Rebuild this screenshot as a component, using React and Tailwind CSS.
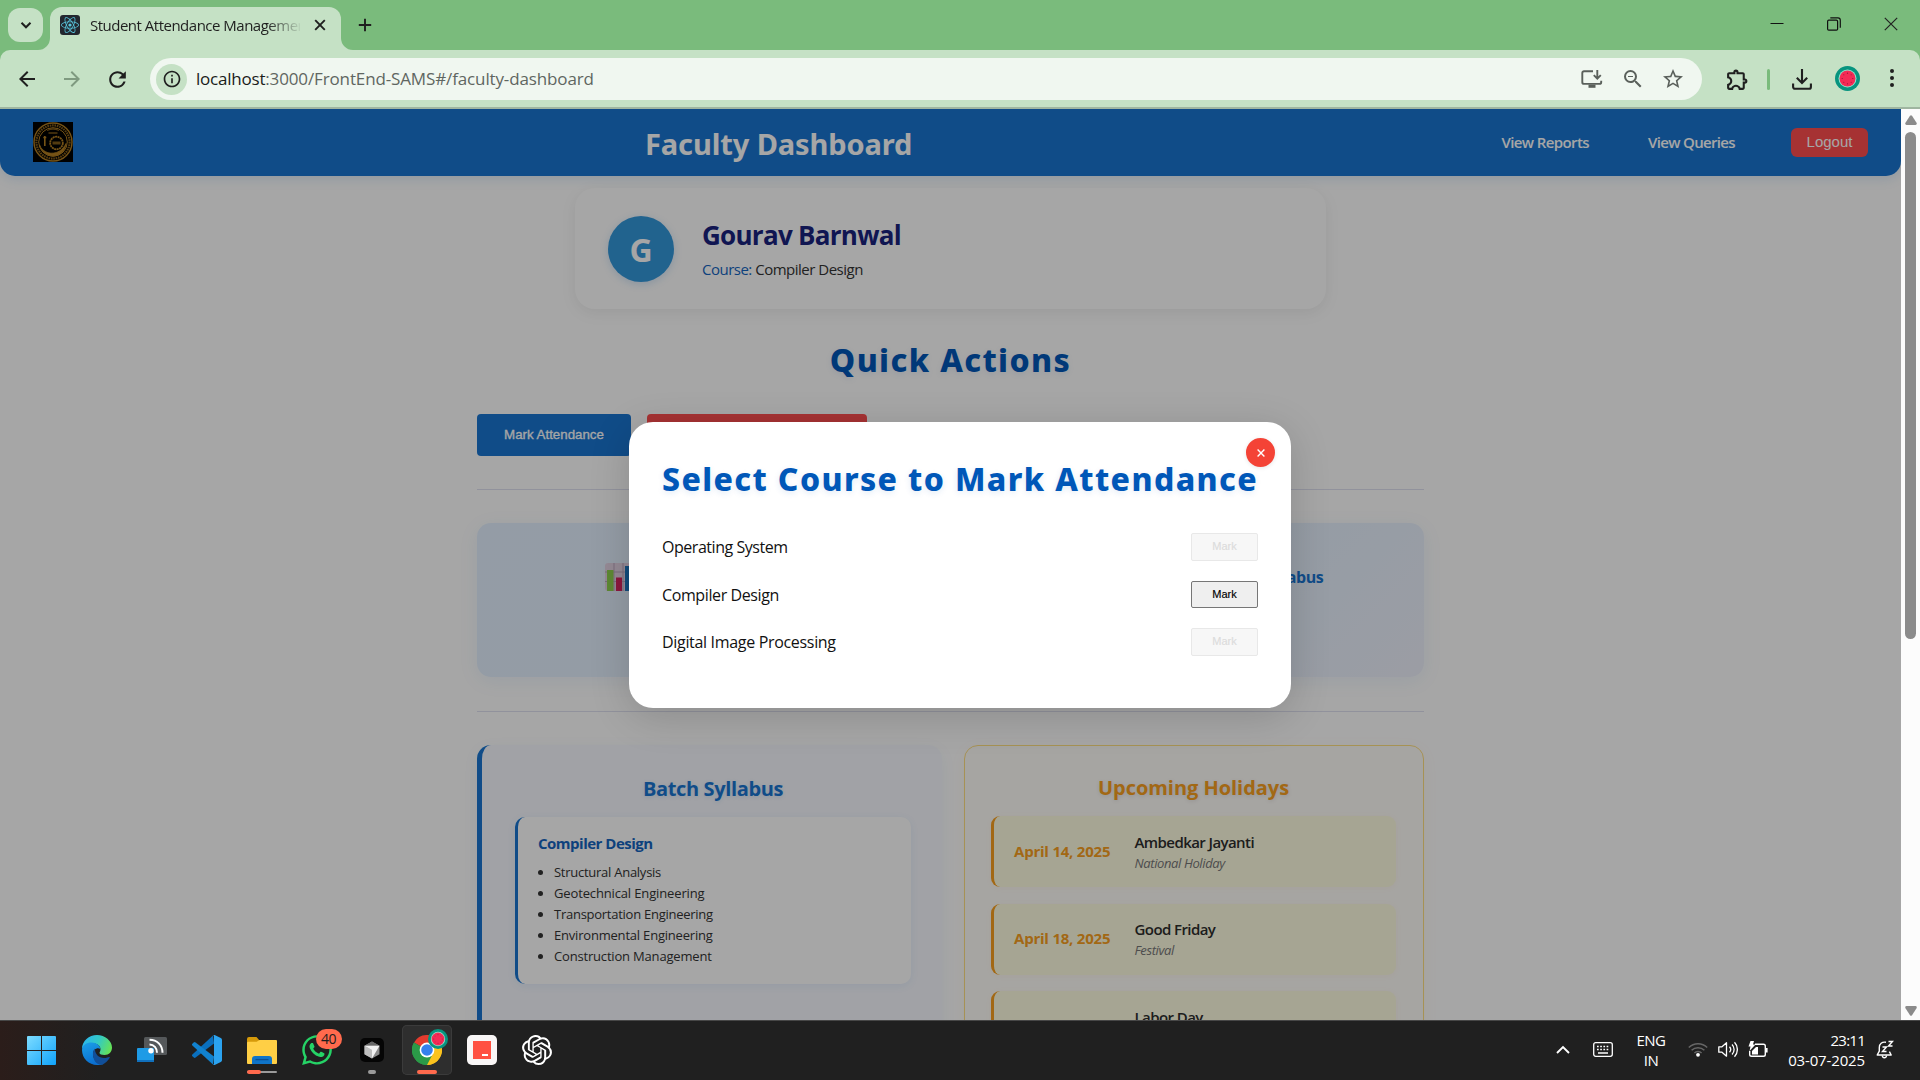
import {
  MdArrowBack,
  MdArrowForward,
  MdRefresh,
  MdInfoOutline,
  MdStarBorder,
  MdOutlineExtension,
  MdZoomOut,
} from "react-icons/md";
import { FaReact, FaWhatsapp } from "react-icons/fa";
import { SiOpenai } from "react-icons/si";

function WatermelonBadge({ className }) {
  return (
    <svg viewBox="0 0 25 25" className={className}>
      <circle cx="12.5" cy="12.5" r="12.5" fill="#07947f" />
      <circle cx="12.5" cy="12.5" r="9" fill="#8fe6cf" />
      <circle cx="12.5" cy="12.5" r="8" fill="#f32b56" />
      <g fill="#8e1638">
        <circle cx="12.5" cy="7.2" r=".6" />
        <circle cx="12.5" cy="17.8" r=".6" />
        <circle cx="7.2" cy="12.5" r=".6" />
        <circle cx="17.8" cy="12.5" r=".6" />
        <circle cx="8.8" cy="8.8" r=".5" />
        <circle cx="16.2" cy="8.8" r=".5" />
        <circle cx="8.8" cy="16.2" r=".5" />
        <circle cx="16.2" cy="16.2" r=".5" />
      </g>
    </svg>
  );
}

function TabStrip() {
  return (
    <div className="flex h-[50px] shrink-0 items-end bg-[#7abb7c] pl-2">
      <div className="mb-2 flex h-[34px] w-[35px] items-center justify-center rounded-xl bg-[#c5e1c5]">
        <svg viewBox="0 0 12 12" className="h-3 w-3" fill="none" stroke="#1f1f1f" strokeWidth="2">
          <path d="M1.5 3.8 6 8.3l4.500-4.500" />
        </svg>
      </div>
      <svg viewBox="0 0 12 12" className="ml-[-5px] h-3 w-3" fill="#c5e1c5">
        <path d="M12 0v12H0A12 12 0 0 0 12 0Z" />
      </svg>
      <div className="flex h-[43px] w-[291px] items-start rounded-t-[12px] bg-[#c5e1c5] pt-2 pl-[10px]">
        <div className="flex h-5 w-5 items-center justify-center rounded-[3px] bg-[#23272f]">
          <FaReact className="h-[18px] w-[18px] text-[#58c4dc]" />
        </div>
        <div className="ml-[10px] h-[22px] w-[210px] overflow-hidden whitespace-nowrap text-[15px] leading-[21px] tracking-[-0.50px] text-[#1f1f1f] [mask-image:linear-gradient(90deg,#000_84%,transparent_101%)]">
          Student Attendance Management
        </div>
        <svg viewBox="0 0 12 12" className="mt-1 ml-[14px] h-3 w-3" fill="none" stroke="#1f1f1f" strokeWidth="1.9">
          <path d="M1.200 1.200l9.600 9.600M10.800 1.200l-9.600 9.600" />
        </svg>
      </div>
      <svg viewBox="0 0 12 12" className="h-3 w-3" fill="#c5e1c5">
        <path d="M0 0v12h12A12 12 0 0 1 0 0Z" />
      </svg>
      <svg viewBox="0 0 14 14" className="mb-[18px] ml-[5px] h-[14px] w-[14px]" fill="none" stroke="#1f1f1f" strokeWidth="1.9">
        <path d="M7 .8v12.400M.8 7h12.400" />
      </svg>
      <div className="mr-[22px] mb-[19px] ml-auto flex items-center gap-[43px]">
        <svg viewBox="0 0 14 14" className="h-[14px] w-[14px]" stroke="#111" strokeWidth="1">
          <path d="M.5 6.500h13" />
        </svg>
        <svg viewBox="0 0 14 14" className="h-[14px] w-[14px]" fill="none" stroke="#111" strokeWidth="1.2">
          <rect x=".6" y="3.200" width="10" height="10" rx="1.200" />
          <path d="M3.300.9h7.700a2.300 2.300 0 0 1 2.300 2.300v7.600" />
        </svg>
        <svg viewBox="0 0 14 14" className="h-[14px] w-[14px]" fill="none" stroke="#222" strokeWidth="1.2">
          <path d="M.8.8l12.400 12.400M13.200.8.8 13.200" />
        </svg>
      </div>
    </div>
  );
}

function Toolbar() {
  return (
    <div className="h-[57px] shrink-0 bg-[#7abb7c]">
      <div className="flex h-full items-center rounded-t-[10px] bg-[#c5e1c5] pt-px pl-[15px] text-[#1f1f1f]">
        <MdArrowBack className="h-6 w-6" />
        <MdArrowForward className="ml-[21px] h-6 w-6 text-[#7f9a80]" />
        <MdRefresh className="ml-[21px] h-[25px] w-[25px]" />
        <div className="ml-5 flex h-[42px] w-[1552px] items-center rounded-full bg-[#f0f7f0] pl-[6px] pr-[17px]">
          <div className="flex h-[31px] w-[31px] items-center justify-center rounded-full bg-[#c5e1c5]">
            <MdInfoOutline className="h-5 w-5" />
          </div>
          <div className="ml-[9px] whitespace-nowrap text-[17px] leading-6 tracking-[-0.13px] text-[#5f6661]">
            <span className="tracking-[-0.22px] text-[#1a1c1a]">localhost</span>
            :3000/FrontEnd-SAMS#/faculty-dashboard
          </div>
          <div className="ml-auto flex items-center text-[#5a605b]">
            <svg viewBox="0 0 22 18" className="mr-[18px] h-[18px] w-[22px]" fill="none" stroke="currentColor" strokeWidth="1.900">
              <path d="M12 1.200H3A1.700 1.700 0 0 0 1.300 2.900v9.300A1.700 1.700 0 0 0 3 13.900h15.500a1.700 1.700 0 0 0 1.700-1.700v-1.500" />
              <path d="M7.500 16.200h7" strokeWidth="3.200" />
              <path d="M16.300 0v8.500M12.800 5.200l3.500 3.500 3.500-3.500" />
            </svg>
            <MdZoomOut className="mr-[16px] h-6 w-6 stroke-0" />
            <MdStarBorder className="h-6 w-6" />
          </div>
        </div>
        <MdOutlineExtension className="ml-[23px] h-[25px] w-[25px]" />
        <div className="ml-[17px] h-[21px] w-[3px] rounded bg-[#7abb7c]" />
        <svg viewBox="0 0 20 21" className="ml-[22px] h-[21px] w-5" fill="none" stroke="currentColor" strokeWidth="2.100">
          <path d="M10 0v14M4.800 8.800l5.200 5.200 5.200-5.200" />
          <path d="M1.100 14.500v3.400A1.800 1.800 0 0 0 2.900 19.700h14.200a1.800 1.800 0 0 0 1.800-1.800v-3.400" />
        </svg>
        <WatermelonBadge className="mb-[2px] ml-[23px] h-[25px] w-[25px]" />
        <div className="mb-[2px] ml-[30px] flex flex-col gap-[3px]">
          <i className="h-1 w-1 rounded-full bg-[#1f1f1f]" />
          <i className="h-1 w-1 rounded-full bg-[#1f1f1f]" />
          <i className="h-1 w-1 rounded-full bg-[#1f1f1f]" />
        </div>
      </div>
    </div>
  );
}

function Seal() {
  return (
    <svg viewBox="0 0 40 40" className="h-10 w-10 bg-black" fill="none" stroke="#b58022">
      <circle cx="20" cy="20" r="19" strokeWidth="1.400" />
      <circle cx="20" cy="20" r="16.600" strokeWidth="2.200" strokeDasharray="1.600 .8" opacity=".75" />
      <circle cx="20" cy="20" r="14.300" strokeWidth="1" />
      <circle cx="23.500" cy="21" r="6.300" strokeWidth="1.800" strokeDasharray="2 .5" />
      <path d="M19.500 21h8" strokeWidth="3" opacity=".7" />
      <path d="M11.800 14v10M10.300 15.500h3" strokeWidth="1.600" />
      <path d="M6.500 23c3 8 13 10.500 20 6 3-1.800 5-4.500 6.500-7.500-.5 8-7 12.500-13 12.500S8.500 30 6.500 23Z" fill="#b58022" strokeWidth=".8" />
      <path d="M14 8.500c4-2 8-2 12 0M15.500 11h9" strokeWidth="1.300" opacity=".7" />
    </svg>
  );
}

function Header() {
  return (
    <header className="flex h-[67px] items-center rounded-b-[15px] bg-[#1976d2] pb-px pl-[33px] text-white shadow-[0_3px_12px_rgba(25,118,210,0.15)]">
      <Seal />
      <h1 className="mt-[3px] ml-[572px] font-['Noto_Sans',sans-serif] whitespace-nowrap text-[29px] leading-10 font-bold tracking-[-0.1px]">
        Faculty Dashboard
      </h1>
      <nav className="ml-auto flex items-center pr-[33px] text-[15px] leading-6 font-semibold whitespace-nowrap">
        <a className="tracking-[-0.6px]">View Reports</a>
        <a className="ml-[59px] tracking-[-0.66px]">View Queries</a>
        <button className="ml-[56px] h-[29px] w-[77px] rounded-md bg-[#ff4d4f] pb-px font-['Liberation_Sans',sans-serif] text-[15px] leading-[26px] font-normal">
          Logout
        </button>
      </nav>
    </header>
  );
}

function ProfileCard() {
  return (
    <section className="mx-auto mt-3 flex h-[121px] w-[751px] items-center rounded-[20px] bg-white pl-[33px] shadow-[0_4px_16px_rgba(0,0,0,0.07)]">
      <div className="flex h-[66px] w-[66px] items-center justify-center rounded-full bg-[#3498db] pt-[3px] text-[32px] leading-none font-bold text-white shadow-[0_2px_8px_rgba(25,118,210,0.2)]">
        G
      </div>
      <div className="ml-7 whitespace-nowrap">
        <h2 className="text-[26px] leading-9 font-bold tracking-[-0.72px] text-[#1a237e]">Gourav Barnwal</h2>
        <p className="mt-[4px] text-[15px] leading-6 tracking-[-0.5px] text-[#333]">
          <span className="font-medium text-[#1565c0]">Course:</span> Compiler Design
        </p>
      </div>
    </section>
  );
}

function ChartEmoji() {
  return (
    <svg viewBox="0 0 28 28" className="h-7 w-7">
      <rect width="28" height="28" rx="3" fill="#e4d3e4" />
      <path d="M0 9h28M0 18.500h28M9 0v28M18 0v28" stroke="#b9a6bd" strokeWidth="1" />
      <rect x="2" y="7" width="6.500" height="21" fill="#8fd14f" />
      <rect x="11" y="14.500" width="6" height="13.500" fill="#d8245f" />
      <rect x="20" y="3" width="6.500" height="25" fill="#1c74bd" />
    </svg>
  );
}

function Tile({ children }) {
  return (
    <div className="flex h-[154px] flex-1 items-start justify-center rounded-[14px] bg-[linear-gradient(135deg,#e3f0ff_0%,#e3f0fe_45%,#eff2fc_100%)] pt-10 shadow-[0_4px_20px_rgba(25,118,210,0.08)]">
      {children}
    </div>
  );
}

const topics = [
  ["Structural Analysis", "tracking-[-0.26px]"],
  ["Geotechnical Engineering", "tracking-[-0.14px]"],
  ["Transportation Engineering", "tracking-[-0.26px]"],
  ["Environmental Engineering", "tracking-[-0.2px]"],
  ["Construction Management", "tracking-[-0.18px]"],
];

function SyllabusPanel() {
  return (
    <section className="h-[420px] w-[465px] rounded-[14px] border-l-[5px] border-[#1976d2] bg-[#f7f9ff] pt-[30px] pr-[31px] pl-[33px] shadow-[0_4px_16px_rgba(25,118,210,0.06)]">
      <h3 className="text-center text-[20px] leading-7 font-bold tracking-[-0.36px] text-[#1976d2] [text-shadow:0_1px_4px_rgba(25,118,210,0.15)]">
        Batch Syllabus
      </h3>
      <div className="mt-[14px] h-[167px] rounded-[10px] border-l-[3px] border-[#1976d2] bg-white pt-[15px] pl-[21px] whitespace-nowrap shadow-[0_2px_8px_rgba(25,118,210,0.08)]">
        <h4 className="-ml-px text-[15px] leading-[22px] font-bold tracking-[-0.5px] text-[#1565c0]">Compiler Design</h4>
        <ul className="mt-[8px] text-[13px] leading-[21px] text-[#333]">
          {topics.map(([name, tracking]) => (
            <li key={name} className="flex items-center">
              <i className="mr-[11px] -ml-px h-[5px] w-[5px] rounded-full bg-[#333]" />
              <span className={tracking}>{name}</span>
            </li>
          ))}
        </ul>
      </div>
    </section>
  );
}

const holidays = [
  ["April 14, 2025", "Ambedkar Jayanti", "National Holiday"],
  ["April 18, 2025", "Good Friday", "Festival"],
  ["May 1, 2025", "Labor Day", "International Holiday"],
];

function HolidayPanel() {
  return (
    <section className="h-[420px] w-[460px] rounded-[14px] border border-[#ffe082] bg-[#fffdf9] pt-[28px] pr-[27px] pl-[26px] shadow-[0_4px_16px_rgba(249,168,37,0.06)]">
      <h3 className="text-center text-[20px] leading-7 font-bold tracking-[-0.04px] text-[#f9a01f] [text-shadow:0_1px_4px_rgba(25,25,25,0.12)]">
        Upcoming Holidays
      </h3>
      <div className="mt-[14px] flex flex-col gap-[16.500px]">
        {holidays.map(([date, name, kind]) => (
          <div
            key={name}
            className="flex h-[71px] shrink-0 items-center rounded-[9px] border-l-[3px] border-[#f9a01f] bg-[#fffde2] pl-5 whitespace-nowrap shadow-[0_1px_6px_rgba(249,168,37,0.05)]"
          >
            <span className="mb-px w-[120.500px] text-[15px] font-bold tracking-[-0.22px] text-[#f9a01f]">{date}</span>
            <div>
              <div className="text-[15px] leading-[22px] font-semibold tracking-[-0.58px] text-[#2d2d2d]">{name}</div>
              <div className="text-[13px] leading-5 tracking-[-0.38px] text-[#777] italic">{kind}</div>
            </div>
          </div>
        ))}
      </div>
    </section>
  );
}

function Page() {
  return (
    <div className="h-full w-[1901px] overflow-hidden bg-white">
      <Header />
      <ProfileCard />
      <h2 className="mt-[31px] mb-[34px] h-10 text-center font-['Noto_Sans',sans-serif] text-[32px] leading-10 font-extrabold tracking-[1.380px] text-[#0057b8] [text-shadow:0_2px_6px_rgba(0,87,184,0.1)]">
        Quick Actions
      </h2>
      <div className="mx-auto w-[947px]">
        <div className="flex gap-4">
          <button className="h-[42px] w-[154px] rounded bg-[#1976d2] pb-px font-['Liberation_Sans',sans-serif] text-[13.300px] text-white [-webkit-text-stroke:0.300px_white]">
            Mark Attendance
          </button>
          <button className="h-[42px] w-[220px] rounded bg-[#ff4d4f]" />
        </div>
        <hr className="mt-[33px] border-[#dfe1f0]" />
        <div className="mt-[33px] flex gap-[22px]">
          <Tile>
            <div className="w-[207px]">
              <ChartEmoji />
            </div>
          </Tile>
          <Tile>
            <div className="mt-[2px] w-[261px] text-right text-[16px] leading-6 font-bold tracking-[-0.45px] text-[#1976d2]">
              Syllabus
            </div>
          </Tile>
        </div>
        <hr className="mt-[34px] border-[#dfe1f0]" />
        <div className="mt-[33px] flex justify-between">
          <SyllabusPanel />
          <HolidayPanel />
        </div>
      </div>
    </div>
  );
}

const courses = [
  ["Operating System", "tracking-[-0.46px]", false],
  ["Compiler Design", "tracking-[-0.39px]", true],
  ["Digital Image Processing", "tracking-[-0.32px]", false],
];

function CourseModal() {
  return (
    <div className="absolute inset-0 flex items-center justify-center bg-black/35 pt-px">
      <div className="relative h-[286px] w-[662px] rounded-[24px] bg-white px-[33px] pt-[37px] shadow-[0_8px_40px_rgba(0,0,0,0.16)]">
        <button className="absolute top-4 right-4 flex h-[29px] w-[29px] items-center justify-center rounded-full bg-[#f44336] shadow-[0_1px_4px_rgba(0,0,0,0.1)]">
          <svg viewBox="0 0 8 8" className="h-2 w-2" stroke="#fff" strokeWidth="1.400">
            <path d="M.6.6l6.800 6.800M7.400.6.6 7.400" />
          </svg>
        </button>
        <h2 className="font-['Noto_Sans',sans-serif] text-[32px] leading-10 font-extrabold tracking-[1.380px] whitespace-nowrap text-[#0057b8] [text-shadow:0_2px_6px_rgba(0,87,184,0.12)]">
          Select Course to Mark Attendance
        </h2>
        <div className="mt-[34px] flex flex-col gap-[19.500px]">
          {courses.map(([name, tracking, enabled]) => (
            <div key={name} className="flex h-7 items-center justify-between">
              <span className="text-[16px] leading-6 text-[#111]">
                <span className={tracking}>{name}</span>
              </span>
              <button
                disabled={!enabled}
                className={
                  enabled
                    ? "h-[27px] w-[67px] rounded-[2px] border border-[#767676] bg-[#efefef] font-['Liberation_Sans',sans-serif] text-[11px] text-black [-webkit-text-stroke:0.150px_black]"
                    : "h-7 w-[67px] rounded-[2px] border border-[#e8e8e8] bg-[#f7f7f7] pb-px font-['Liberation_Sans',sans-serif] text-[11px] text-[#dcdcdc] [-webkit-text-stroke:0.150px_#dcdcdc]"
                }
              >
                Mark
              </button>
            </div>
          ))}
        </div>
      </div>
    </div>
  );
}

function Scrollbar() {
  return (
    <div className="relative z-10 flex h-full w-[19px] flex-col items-center bg-[#fcfcfc]">
      <svg viewBox="0 0 12 10" className="mt-[6px] h-[10px] w-3" fill="#8b8b8b">
        <path d="M5 .7Q6-.4 7 .7l4.700 7.300Q12 10 10.500 10h-9Q0 10 .3 8Z" />
      </svg>
      <div className="mt-[7px] h-[507px] w-[11px] rounded-full bg-[#8b8b8b]" />
      <svg viewBox="0 0 12 10" className="mt-auto mb-[4px] h-[10px] w-3 rotate-180" fill="#8b8b8b">
        <path d="M5 .7Q6-.4 7 .7l4.700 7.300Q12 10 10.500 10h-9Q0 10 .3 8Z" />
      </svg>
    </div>
  );
}

function WindowsLogo() {
  return (
    <svg viewBox="0 0 29 29" className="h-[29px] w-[29px]">
      <defs>
        <linearGradient id="win" x1="0" y1="0" x2="1" y2="1">
          <stop offset="0" stopColor="#7ddcff" />
          <stop offset="1" stopColor="#10a3fb" />
        </linearGradient>
      </defs>
      <path d="M0 1Q0 0 1 0h13v14H0ZM15 0h13q1 0 1 1v13H15ZM0 15h14v14H1Q0 29 0 28ZM15 15h14v13q0 1-1 1H15Z" fill="url(#win)" />
    </svg>
  );
}

function EdgeLogo() {
  return (
    <svg viewBox="0 0 30 30" className="h-[30px] w-[30px]">
      <defs>
        <linearGradient id="edgeTop" x1="0" y1=".3" x2="1" y2=".6">
          <stop offset="0" stopColor="#2bb5ee" />
          <stop offset=".5" stopColor="#33c9c5" />
          <stop offset="1" stopColor="#66e355" />
        </linearGradient>
        <linearGradient id="edgeSide" x1="0" y1="0" x2=".4" y2="1">
          <stop offset="0" stopColor="#1ba0e8" />
          <stop offset="1" stopColor="#0b6fd0" />
        </linearGradient>
      </defs>
      <path d="M0 14C0 6 7 0 15 0s15 6 15 12.500C30 17 27 20 22.500 20c-3 0-5-1-5-2s1-1.500 1-4c0-3-3-5.500-7-5.500C5.500 8.500 1 11 0 14Z" fill="url(#edgeTop)" />
      <path d="M0 15C0 10 4.500 7.500 9.500 7.500S18.300 10.500 18.300 14c-2.500-2-7.300 0-7.300 5 0 5.500 5 10 10.500 10-2 .9-4 1-6.500 1C7 30 0 23.500 0 15Z" fill="url(#edgeSide)" />
      <path d="M11 18c0-2 .8-3.500 2-4.600-.5 5 3.500 9.600 9 9.600 3 0 4.500-1.500 5.700-1 .6.500-2.700 5.500-7.200 7.500C14 30.500 10.500 24 11 18Z" fill="#114f99" />
    </svg>
  );
}

function CastLogo() {
  return (
    <svg viewBox="0 0 30 26" className="h-[26px] w-[30px]">
      <rect x="7" y="0" width="23" height="18" rx="1.500" fill="#55585a" />
      <rect x="0" y="11" width="17" height="14" rx="1" fill="#1e9be6" />
      <path d="M0 23h17v1q0 1-1 1H1q-1 0-1-1Z" fill="#1070bd" />
      <circle cx="14" cy="13.700" r="2.700" fill="#fff" />
      <path d="M12.500 7.500c4.500 0 7.500 3.500 7.500 8.300M12.500 2.800C20 2.800 25.500 8 25.500 15.800" fill="none" stroke="#fff" strokeWidth="2" />
    </svg>
  );
}

function CodeLogo() {
  return (
    <svg viewBox="0 0 30 30" className="h-[30px] w-[30px]">
      <path d="M22 8.500 3.600 22.600a1.500 1.500 0 0 1-1.800 0L.4 21.300a1.300 1.300 0 0 1 0-1.900L21 .6Z" fill="#0a6fbd" />
      <path d="M22 21.500 3.600 7.400a1.500 1.500 0 0 0-1.800 0L.4 8.700a1.300 1.300 0 0 0 0 1.900L21 29.400Z" fill="#1182cf" />
      <path d="M21 29.700c.8.400 1.500.3 2.200 0l5.600-2.700c.8-.4 1.200-1 1.200-1.900V4.900c0-.9-.4-1.500-1.200-1.900L23.200.3C22.500 0 21.800-.1 21 .3c.6 0 1 .5 1 1.200v27c0 .7-.4 1.200-1 1.200Z" fill="#2ba3f0" />
    </svg>
  );
}

function FolderLogo() {
  return (
    <svg viewBox="0 0 30 27" className="h-[27px] w-[30px]">
      <path d="M0 2Q0 0 2 0h7.500l3 3.500H28q2 0 2 2V12H0Z" fill="#d69a0a" />
      <path d="M0 6q0-1.200 1.200-1.200h8.500L12.500 3H29q1 0 1 1v22q0 1-1 1H1q-1 0-1-1Z" fill="#ffcf45" />
      <path d="M5 27v-5q0-3 3-3h14q3 0 3 3v5Z" fill="#0f74c8" />
      <path d="M8.500 22.600h13" stroke="#0a4f94" strokeWidth="1.300" />
    </svg>
  );
}

function CursorLogo() {
  return (
    <svg viewBox="0 0 24 24" className="h-6 w-6">
      <rect width="24" height="24" rx="5" fill="#050505" />
      <path d="m12 3.500 7.500 4.300v8.400L12 20.500l-7.500-4.300V7.800Z" fill="#8a8a8a" />
      <path d="M4.500 7.800 12 3.500l7.500 4.300Z" fill="#666" />
      <path d="M4.500 7.800 12 12v8.500l-7.500-4.300Z" fill="#bdbdbd" />
      <path d="M4.500 7.800h15L12 20.500V12Z" fill="#f1f1f1" />
    </svg>
  );
}

function ChromeLogo() {
  return (
    <svg viewBox="0 0 30 30" className="h-[30px] w-[30px]">
      <path d="M15 15 2 7.500A15 15 0 0 1 28 7.500Z" fill="#e33b2e" />
      <path d="M15 15 28 7.500A15 15 0 0 1 15 30Z" fill="#fcc31e" />
      <path d="M15 15v15A15 15 0 0 1 2 7.500Z" fill="#2b9a48" />
      <path d="M15 8.200h13.300A15 15 0 0 1 15 30l6-11.600Z" fill="#fcc31e" />
      <path d="M9 18.400 2 7.500A15 15 0 0 0 15 30l6-11.600Z" fill="#2b9a48" />
      <circle cx="15" cy="15" r="7.400" fill="#fff" />
      <circle cx="15" cy="15" r="5.800" fill="#3480ee" />
    </svg>
  );
}

function TaskItem({ children, active }) {
  return (
    <div className="flex w-[55px] justify-center pt-[4px]">
      <div
        className={
          active
            ? "relative flex h-[50px] w-[50px] items-center justify-center rounded-[5px] bg-[#2e2e2e] ring-1 ring-[#3b3b3b] ring-inset"
            : "relative flex h-[50px] w-[50px] items-center justify-center"
        }
      >
        {children}
      </div>
    </div>
  );
}

function Taskbar() {
  return (
    <footer className="flex h-[60px] shrink-0 border-t border-[#474747] bg-[linear-gradient(90deg,#2b1d1a_0px,#202020_100px)] pl-[14px] text-[15px] leading-5 text-white">
      <TaskItem>
        <WindowsLogo />
      </TaskItem>
      <TaskItem>
        <EdgeLogo />
      </TaskItem>
      <TaskItem>
        <CastLogo />
      </TaskItem>
      <TaskItem>
        <CodeLogo />
      </TaskItem>
      <TaskItem>
        <FolderLogo />
        <span className="absolute bottom-[2px] left-[10px] h-[2px] w-[30px] rounded-full bg-[#9a9a9a]" />
        <span className="absolute bottom-px left-[10px] h-1 w-[14px] rounded-full bg-[#ff6a4d]" />
      </TaskItem>
      <TaskItem>
        <FaWhatsapp className="h-[34px] w-[34px] text-[#25d366]" />
        <span className="absolute top-[4px] left-[24px] flex h-5 w-[26px] items-center justify-center rounded-full bg-[#ff6a4d] text-[14px] tracking-[-0.5px] text-[#1c1c1c]">
          40
        </span>
      </TaskItem>
      <TaskItem>
        <CursorLogo />
        <span className="absolute bottom-px left-[21px] h-1 w-2 rounded-full bg-[#9a9a9a]" />
      </TaskItem>
      <TaskItem active>
        <ChromeLogo />
        <WatermelonBadge className="absolute top-[4px] right-[4px] h-5 w-5" />
        <span className="absolute bottom-px left-[15px] h-1 w-5 rounded-full bg-[#ff6a4d]" />
      </TaskItem>
      <TaskItem>
        <div className="flex h-[30px] w-[30px] items-center justify-center rounded-[5px] bg-[#f8f6f6]">
          <div className="flex h-[18px] w-[18px] items-end justify-end bg-[#ff5142] pr-[3px] pb-[3px]">
            <i className="h-[2px] w-[6px] bg-white" />
          </div>
        </div>
      </TaskItem>
      <TaskItem>
        <SiOpenai className="h-[30px] w-[30px]" />
      </TaskItem>
      <div className="ml-auto flex items-center pr-[26px] pb-[2px]">
        <svg viewBox="0 0 14 9" className="h-[9px] w-[14px]" fill="none" stroke="#fff" strokeWidth="1.900">
          <path d="M1 8l6-6 6 6" />
        </svg>
        <svg viewBox="0 0 20 15" className="ml-[23px] h-[15px] w-5" fill="none" stroke="#fff" strokeWidth="1.300">
          <rect x=".7" y=".7" width="18.600" height="13.600" rx="2" />
          <path d="M4 4.500h12.500M4 7.500h12.500" strokeWidth="1.700" strokeDasharray="1.700 1.500" />
          <path d="M5 11h10" strokeWidth="1.500" />
        </svg>
        <div className="ml-[23px] w-[30px] text-center tracking-[-0.5px]">
          ENG
          <br />
          IN
        </div>
        <svg viewBox="0 0 20 15" className="ml-[22px] h-[15px] w-5" fill="none" stroke="#666" strokeWidth="1.500">
          <path d="M.8 5.500a13 13 0 0 1 18.400 0M3.600 8.300a9 9 0 0 1 12.800 0M6.400 11a5 5 0 0 1 7.200 0" />
          <circle cx="10" cy="12.800" r="1.900" fill="#fff" stroke="none" />
        </svg>
        <svg viewBox="0 0 20 17" className="ml-[10px] h-[17px] w-5" fill="none" stroke="#fff" strokeWidth="1.300">
          <path d="M.8 5.800H4l4.500-4v13.400l-4.500-4H.8Z" strokeLinejoin="round" />
          <path d="M11.500 5.800a4 4 0 0 1 0 5.400M14 3.500a7 7 0 0 1 0 10M16.500 1.300a10.500 10.500 0 0 1 0 14.400" />
        </svg>
        <svg viewBox="0 0 20 17" className="ml-[10px] h-[17px] w-5" fill="none" stroke="#fff" strokeWidth="1.400">
          <path d="M7 3.200h8.500q1.800 0 1.800 1.800v8.500q0 1.800-1.800 1.800H3.500q-1.800 0-1.800-1.800V10" />
          <path d="M18.500 7v4.500" strokeWidth="2.200" />
          <path d="M4 13.500v-3.500l4-4h2v7.500Z" fill="#fff" stroke="none" />
          <path d="M2.500 0h3.500L5 3.500h2.500L1.500 10l1-4.500H.5Z" fill="#fff" stroke="none" />
        </svg>
        <div className="ml-5 w-[77px] text-right whitespace-nowrap tracking-[-0.140px]">
          <span className="tracking-[-0.750px]">23:11</span>
          <br />
          03-07-2025
        </div>
        <svg viewBox="0 0 18 19" className="ml-[11px] h-[19px] w-[18px]" fill="none" stroke="#fff" strokeWidth="1.400">
          <path d="M10 2.300C6 1.500 3.300 4 3.300 7.500v3.700L1.200 15h14l-1.800-3.400" strokeLinejoin="round" />
          <path d="M6.200 15.500c.5 3 3.900 3 4.400 0" />
          <path d="M6.500 7h4l-4 4.500h4M12.500 1.500h4L12.500 6h4" />
        </svg>
      </div>
    </footer>
  );
}

export default function App() {
  return (
    <div className="flex h-[1080px] w-[1920px] flex-col overflow-hidden font-['Open_Sans',sans-serif]">
      <TabStrip />
      <Toolbar />
      <div className="h-[2px] shrink-0 bg-[#9fb5a0]" />
      <div className="relative flex h-[911px] shrink-0 overflow-hidden">
        <Page />
        <CourseModal />
        <Scrollbar />
      </div>
      <Taskbar />
    </div>
  );
}
